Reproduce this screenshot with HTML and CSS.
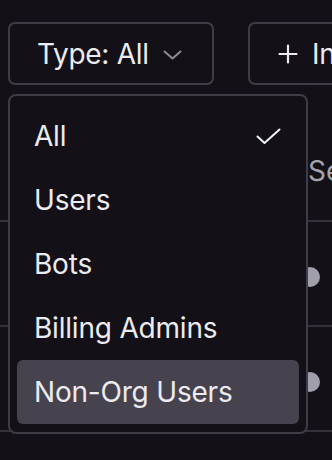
FILE: index.html
```html
<!DOCTYPE html>
<html lang="en">
<head>
  <meta charset="UTF-8">
  <meta name="viewport" content="width=device-width, initial-scale=1.0">
  <title>Members</title>
  <link rel="stylesheet" href="styles.css">
</head>
<body>
  <div class="toolbar">
    <div class="filter-wrap">
      <button class="btn filter">
        <span>Type: All</span>
        <svg class="chevron" width="19" height="10" viewBox="0 0 19 10"><polyline points="1.5,1.5 9.5,8.5 17.5,1.5" fill="none" stroke="#8e8b95" stroke-width="2" stroke-linecap="round" stroke-linejoin="round"/></svg>
      </button>

      <!-- open type menu -->
      <div class="menu">
        <div class="menu-item selected">
          <span>All</span>
          <svg width="25" height="17" viewBox="0 0 25 17"><polyline points="1.5,8.5 8.5,15 23.5,1.5" fill="none" stroke="#f2f1f4" stroke-width="2" stroke-linecap="round" stroke-linejoin="round"/></svg>
        </div>
        <div class="menu-item">Users</div>
        <div class="menu-item">Bots</div>
        <div class="menu-item">Billing Admins</div>
        <div class="menu-item active">Non-Org Users</div>
      </div>
    </div>
    <button class="btn invite">
      <svg width="20" height="20" viewBox="0 0 20 20"><path d="M10 1.5v17M1.5 10h17" stroke="#ecebef" stroke-width="2.2" stroke-linecap="round"/></svg>
      <span>Invite</span>
    </button>
  </div>

  <div class="table">
    <div class="row head">
      <div class="cell name"></div>
      <div class="cell seat">Seat</div>
    </div>
    <div class="row">
      <div class="cell name"></div>
      <div class="cell seat"><span class="dot"></span></div>
    </div>
    <div class="row">
      <div class="cell name"></div>
      <div class="cell seat"><span class="dot"></span></div>
    </div>
  </div>
</body>
</html>
```

FILE: styles.css
```css
* {
  margin: 0;
  padding: 0;
  box-sizing: border-box;
}

body {
  width: 100vw;
  height: 100vh;
  font-family: Inter, "Noto Sans", sans-serif;
  background-color: #131117;
  color: #ecebef;
  overflow: hidden;
}

.toolbar {
  display: flex;
  gap: 34px;
  padding: 22px 0 0 8px;
  white-space: nowrap;
}

.filter-wrap {
  position: relative;
}

.btn {
  display: flex;
  align-items: center;
  height: 63px;
  border: 2px solid #3f3c47;
  border-radius: 7px;
  background-color: #131117;
  color: #ecebef;
  font-family: inherit;
  font-size: 28px;
  letter-spacing: -0.3px;
  cursor: pointer;
}

.filter {
  width: 206px;
  padding: 0 0 0 27px;
  gap: 14px;
}

.chevron {
  margin-top: 2px;
}

.invite {
  padding: 0 28px;
  gap: 14px;
  width: 200px;
  flex-shrink: 0;
}

/* dropdown */
.menu {
  position: absolute;
  top: 72px;
  left: 0;
  width: 300px;
  padding: 8px 7px 8px;
  background-color: #131117;
  border: 2px solid #3f3c47;
  border-radius: 8px;
  z-index: 2;
}

.menu-item {
  display: flex;
  align-items: center;
  justify-content: space-between;
  height: 64px;
  padding: 0 18px 0 17px;
  border-radius: 6px;
  font-size: 28px;
  letter-spacing: -0.2px;
}

.menu-item.active {
  background-color: #46434f;
}

/* table behind the menu */
.table {
  margin-top: 37px;
}

.row {
  display: grid;
  grid-template-columns: 300px 1fr;
  height: 105px;
  border-bottom: 2px solid #34313b;
  align-items: center;
}

.row.head {
  height: 100px;
}

.cell {
  white-space: nowrap;
  overflow: hidden;
}

.head .cell {
  color: #a7a4ad;
  font-size: 28px;
  padding-left: 8px;
}

.seat .dot {
  margin-top: 6px;
}

.dot {
  display: block;
  width: 20px;
  height: 20px;
  border-radius: 50%;
  background-color: #a19eab;
}
```
